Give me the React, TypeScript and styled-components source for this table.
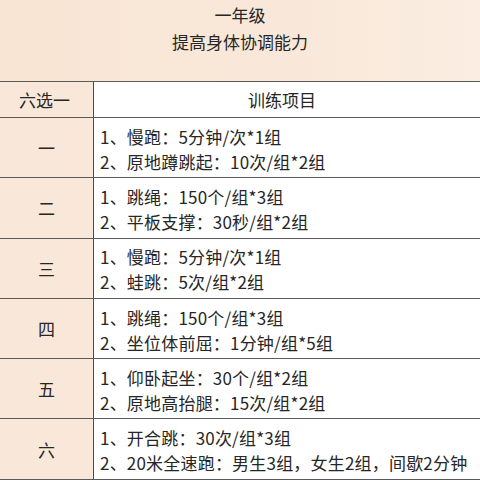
import React from 'react';
import styled, { createGlobalStyle } from 'styled-components';

const GlobalStyle = createGlobalStyle`
    html, body {
        margin: 0;
        padding: 0;
        background: #ffffff;
    }
    body {
        font-family: 'Noto Sans CJK SC', 'Noto Sans', sans-serif;
        color: #2b2b2b;
    }
`;

const plans = [
    { no: '一', items: ['1、慢跑：5分钟/次*1组', '2、原地蹲跳起：10次/组*2组'] },
    { no: '二', items: ['1、跳绳：150个/组*3组', '2、平板支撑：30秒/组*2组'] },
    { no: '三', items: ['1、慢跑：5分钟/次*1组', '2、蛙跳：5次/组*2组'] },
    { no: '四', items: ['1、跳绳：150个/组*3组', '2、坐位体前屈：1分钟/组*5组'] },
    { no: '五', items: ['1、仰卧起坐：30个/组*2组', '2、原地高抬腿：15次/组*2组'] },
    { no: '六', items: ['1、开合跳：30次/组*3组', '2、20米全速跑：男生3组，女生2组，间歇2分钟'] },
];

const App = () => {
    return (
        <Page>
            <GlobalStyle />
            <Heading>
                <Title>一年级</Title>
                <Title>提高身体协调能力</Title>
            </Heading>
            <Table>
                <HeadRow>
                    <KeyCell>
                        <HeadLabel>六选一</HeadLabel>
                    </KeyCell>
                    <HeadCell>训练项目</HeadCell>
                </HeadRow>
                {plans.map((p) => (
                    <Row key={p.no}>
                        <KeyCell>{p.no}</KeyCell>
                        <ItemCell>
                            {p.items.map((t) => (
                                <Line key={t}>{t}</Line>
                            ))}
                        </ItemCell>
                    </Row>
                ))}
            </Table>
        </Page>
    );
};

const Page = styled.div`
    width: 480px;
    height: 480px;
    overflow: hidden;
    background: #ffffff;
`;

const Heading = styled.header`
    height: 81px;
    background: linear-gradient(90deg, #f8e5d4 0%, #f9e8d9 60%, #faede1 100%);
    display: flex;
    flex-direction: column;
    align-items: center;
    padding-top: 3px;
    box-sizing: border-box;
    gap: 3px;
`;

const Title = styled.div`
    font-size: 17px;
    line-height: 24px;
    color: #262626;
`;

const Table = styled.div`
    border-top: 1.5px solid #5b5b5b;
`;

const Row = styled.div`
    display: grid;
    grid-template-columns: 94px 1fr;
    height: 59.3px;
    border-bottom: 1.5px solid #5b5b5b;
`;

const HeadRow = styled(Row)`
    height: 35px;
`;

const KeyCell = styled.div`
    background: #f9e8d9;
    border-right: 1.5px solid #4a4a4a;
    display: flex;
    align-items: center;
    justify-content: center;
    font-size: 17px;
    color: #262626;
`;

const HeadLabel = styled.span`
    margin-left: -4px;
`;

const HeadCell = styled.div`
    display: flex;
    align-items: center;
    justify-content: center;
    font-size: 17px;
    color: #262626;
    padding-right: 10px;
`;

const ItemCell = styled.div`
    display: flex;
    flex-direction: column;
    justify-content: center;
    padding-left: 6px;
    padding-top: 2px;
`;

const Line = styled.div`
    font-size: 17px;
    line-height: 25px;
    letter-spacing: 0.2px;
    color: #262626;
    white-space: nowrap;
`;

export default App;
